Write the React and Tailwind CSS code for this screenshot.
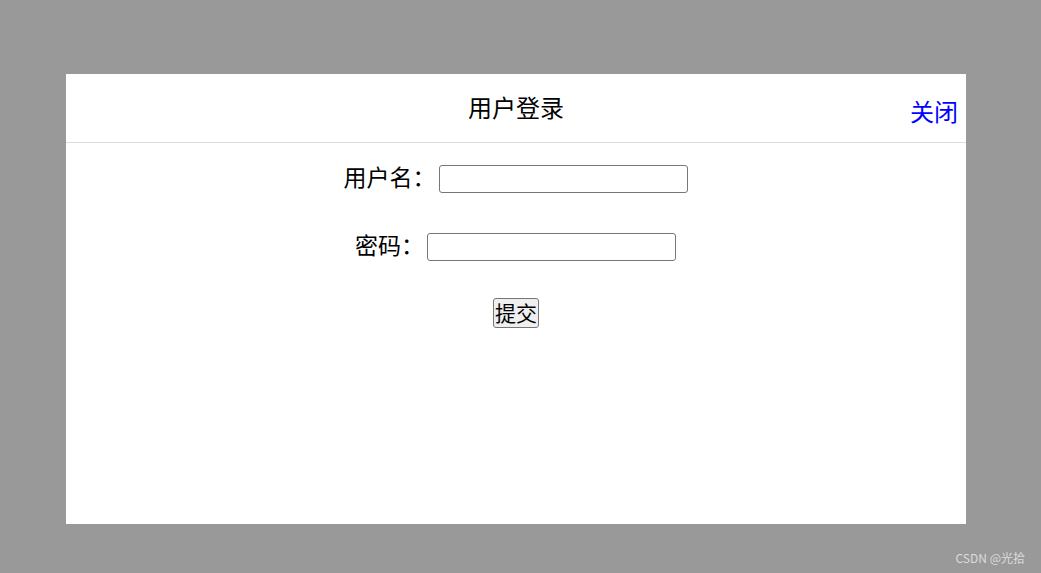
import React from 'react';

const cjk = { fontFamily: '"Microsoft YaHei", "Noto Sans CJK SC", "Noto Sans", sans-serif' };

function App() {
    return (
        <div className="relative w-[1041px] h-[573px] bg-[#999999] overflow-hidden" style={cjk}>
            {/* modal */}
            <div className="absolute left-[66px] top-[74px] w-[900px] h-[450px] bg-white flex flex-col">
                <div className="relative h-[69px] flex items-center justify-center border-b border-[#dddddd]">
                    <span className="text-[24px] leading-none text-black pb-[2px]">用户登录</span>
                    <button className="absolute right-[8px] top-[25px] text-[24px] leading-none text-[#0000ff]">关闭</button>
                </div>

                <div className="flex flex-col items-center pt-[22px]">
                    <div className="flex items-center h-[28px] gap-[3px] pr-[1px]">
                        <label className="text-[23px] leading-none text-black pb-[5px]">用户名：</label>
                        <input type="text" className="w-[249px] h-[28px] border border-[#767676] rounded-[3px] bg-white" />
                    </div>
                    <div className="flex items-center h-[28px] gap-[3px] mt-[40px] pr-[1px]">
                        <label className="text-[23px] leading-none text-black pb-[5px]">密码：</label>
                        <input type="password" className="w-[249px] h-[28px] border border-[#767676] rounded-[3px] bg-white" />
                    </div>
                    <button className="mt-[37px] w-[46px] h-[30px] border border-[#767676] rounded-[3px] bg-[#efefef] text-[21px] leading-none text-black pb-[2px]">
                        提交
                    </button>
                </div>
            </div>

            <div className="absolute right-[16px] bottom-[9px] text-[12px] leading-none text-[#dcdcdc]">
                CSDN @光拾
            </div>
        </div>
    );
}

export default App;
